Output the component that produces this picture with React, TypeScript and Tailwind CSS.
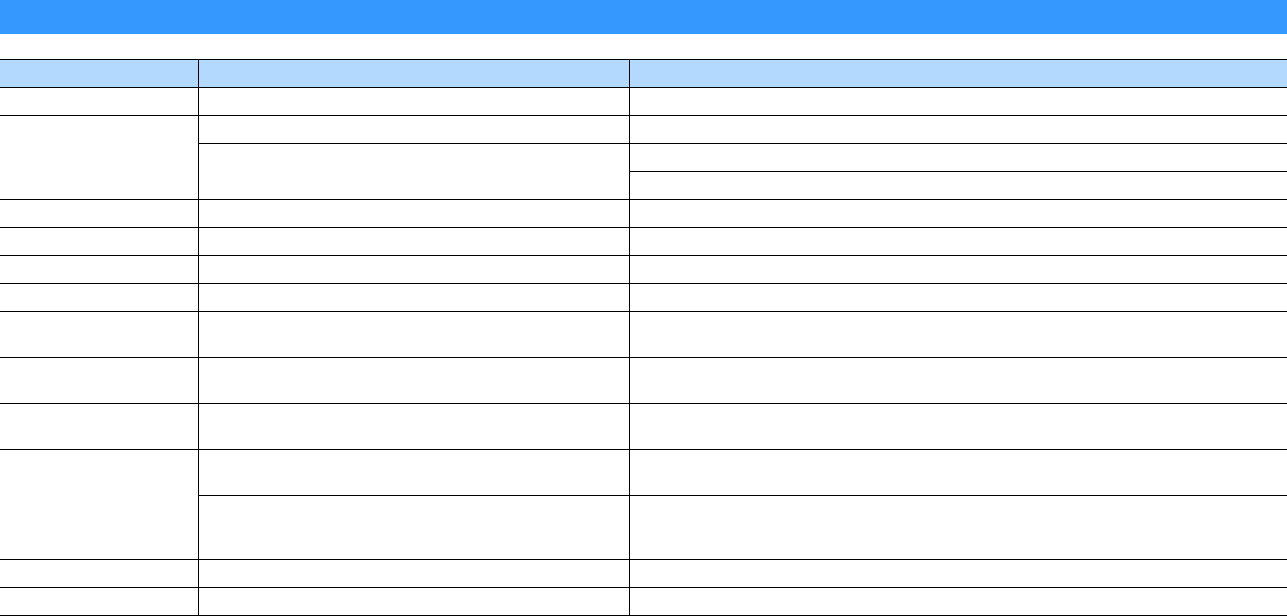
import React from 'react';

const cell = 'border-y border-black p-0';
const cellL = 'border-y border-l border-black p-0';

const App: React.FC = () => {
  return (
    <div className="w-[1287px] bg-white font-['Liberation_Sans',sans-serif] text-[13px]">
      <div className="h-[34px] bg-[#3399ff]" />
      <div className="pt-[25px]">
        <table className="w-full border-collapse table-fixed">
          <colgroup>
            <col className="w-[198px]" />
            <col className="w-[431px]" />
            <col />
          </colgroup>
          <thead>
            <tr className="h-[28px] bg-[#b3d9ff]">
              <th className={cell}></th>
              <th className={cellL}></th>
              <th className={cellL}></th>
            </tr>
          </thead>
          <tbody>
            <tr className="h-[28px]">
              <td className={cell}></td>
              <td className={cellL}></td>
              <td className={cellL}></td>
            </tr>
            <tr className="h-[28px]">
              <td className={cell} rowSpan={3}></td>
              <td className={cellL}></td>
              <td className={cellL}></td>
            </tr>
            <tr className="h-[28px]">
              <td className={cellL} rowSpan={2}></td>
              <td className={cellL}></td>
            </tr>
            <tr className="h-[28px]">
              <td className={cellL}></td>
            </tr>
            {[0, 1, 2, 3].map((i) => (
              <tr key={'s' + i} className="h-[28px]">
                <td className={cell}></td>
                <td className={cellL}></td>
                <td className={cellL}></td>
              </tr>
            ))}
            {[0, 1, 2].map((i) => (
              <tr key={'t' + i} className="h-[46px]">
                <td className={cell}></td>
                <td className={cellL}></td>
                <td className={cellL}></td>
              </tr>
            ))}
            <tr className="h-[46px]">
              <td className={cell} rowSpan={2}></td>
              <td className={cellL}></td>
              <td className={cellL}></td>
            </tr>
            <tr className="h-[64px]">
              <td className={cellL}></td>
              <td className={cellL}></td>
            </tr>
            <tr className="h-[28px]">
              <td className={cell}></td>
              <td className={cellL}></td>
              <td className={cellL}></td>
            </tr>
            <tr className="h-[28px]">
              <td className={cell}></td>
              <td className={cellL}></td>
              <td className={cellL}></td>
            </tr>
          </tbody>
        </table>
      </div>
    </div>
  );
};

export default App;
